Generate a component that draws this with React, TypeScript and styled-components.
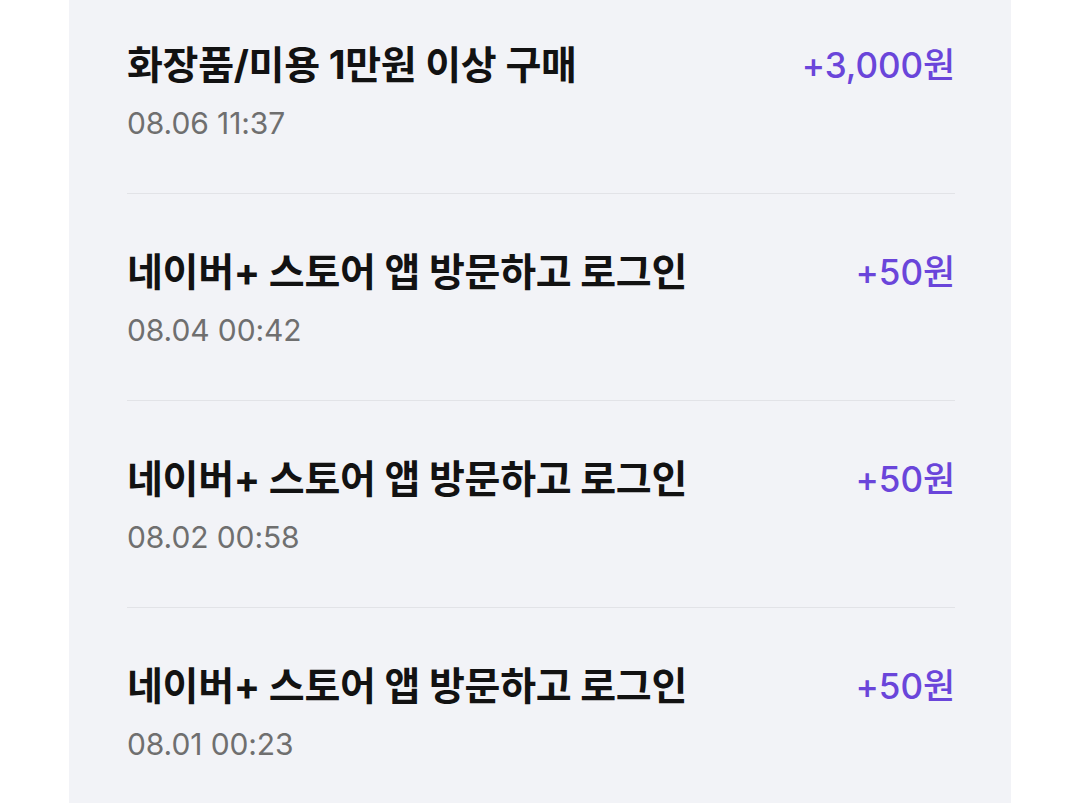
import React from "react";
import styled, { createGlobalStyle } from "styled-components";

const GlobalStyle = createGlobalStyle`
  html, body { margin: 0; padding: 0; background: #ffffff; }
  body { font-family: Inter, "Noto Sans CJK KR", sans-serif; overflow: hidden; }
`;

const Page = styled.div`
  display: flex;
  justify-content: center;
  padding-left: 69px;
  padding-right: 69px;
  height: 803px;
  box-sizing: border-box;
`;

const Panel = styled.div`
  flex: 1;
  background: #f2f3f7;
  padding: 0 56px 0 58px;
  display: flex;
  flex-direction: column;
`;

const Row = styled.div`
  display: flex;
  align-items: flex-start;
  justify-content: space-between;
  padding: 52px 0 50px;
  border-bottom: 1px solid #e2e3e7;
  &:first-child { padding-top: 39px; }
  &:last-child { border-bottom: none; }
`;

const Info = styled.div`
  display: flex;
  flex-direction: column;
  gap: 12px;
`;

const Title = styled.div`
  font-size: 39px;
  line-height: 52px;
  font-weight: 700;
  color: #121212;
  letter-spacing: -0.3px;
`;

const DateText = styled.div`
  font-size: 30px;
  line-height: 40px;
  font-weight: 400;
  color: #6f6f6f;
  letter-spacing: -0.1px;
`;

const Amount = styled.div`
  font-size: 35px;
  line-height: 52px;
  font-weight: 500;
  color: #6a45da;
  letter-spacing: -0.1px;
`;

const items = [
  { title: "화장품/미용 1만원 이상 구매", date: "08.06 11:37", amount: "+3,000원" },
  { title: "네이버+ 스토어 앱 방문하고 로그인", date: "08.04 00:42", amount: "+50원" },
  { title: "네이버+ 스토어 앱 방문하고 로그인", date: "08.02 00:58", amount: "+50원" },
  { title: "네이버+ 스토어 앱 방문하고 로그인", date: "08.01 00:23", amount: "+50원" },
];

export default function App() {
  return (
    <>
      <GlobalStyle />
      <Page>
        <Panel>
          {items.map((it, i) => (
            <Row key={i}>
              <Info>
                <Title>{it.title}</Title>
                <DateText>{it.date}</DateText>
              </Info>
              <Amount>{it.amount}</Amount>
            </Row>
          ))}
        </Panel>
      </Page>
    </>
  );
}
